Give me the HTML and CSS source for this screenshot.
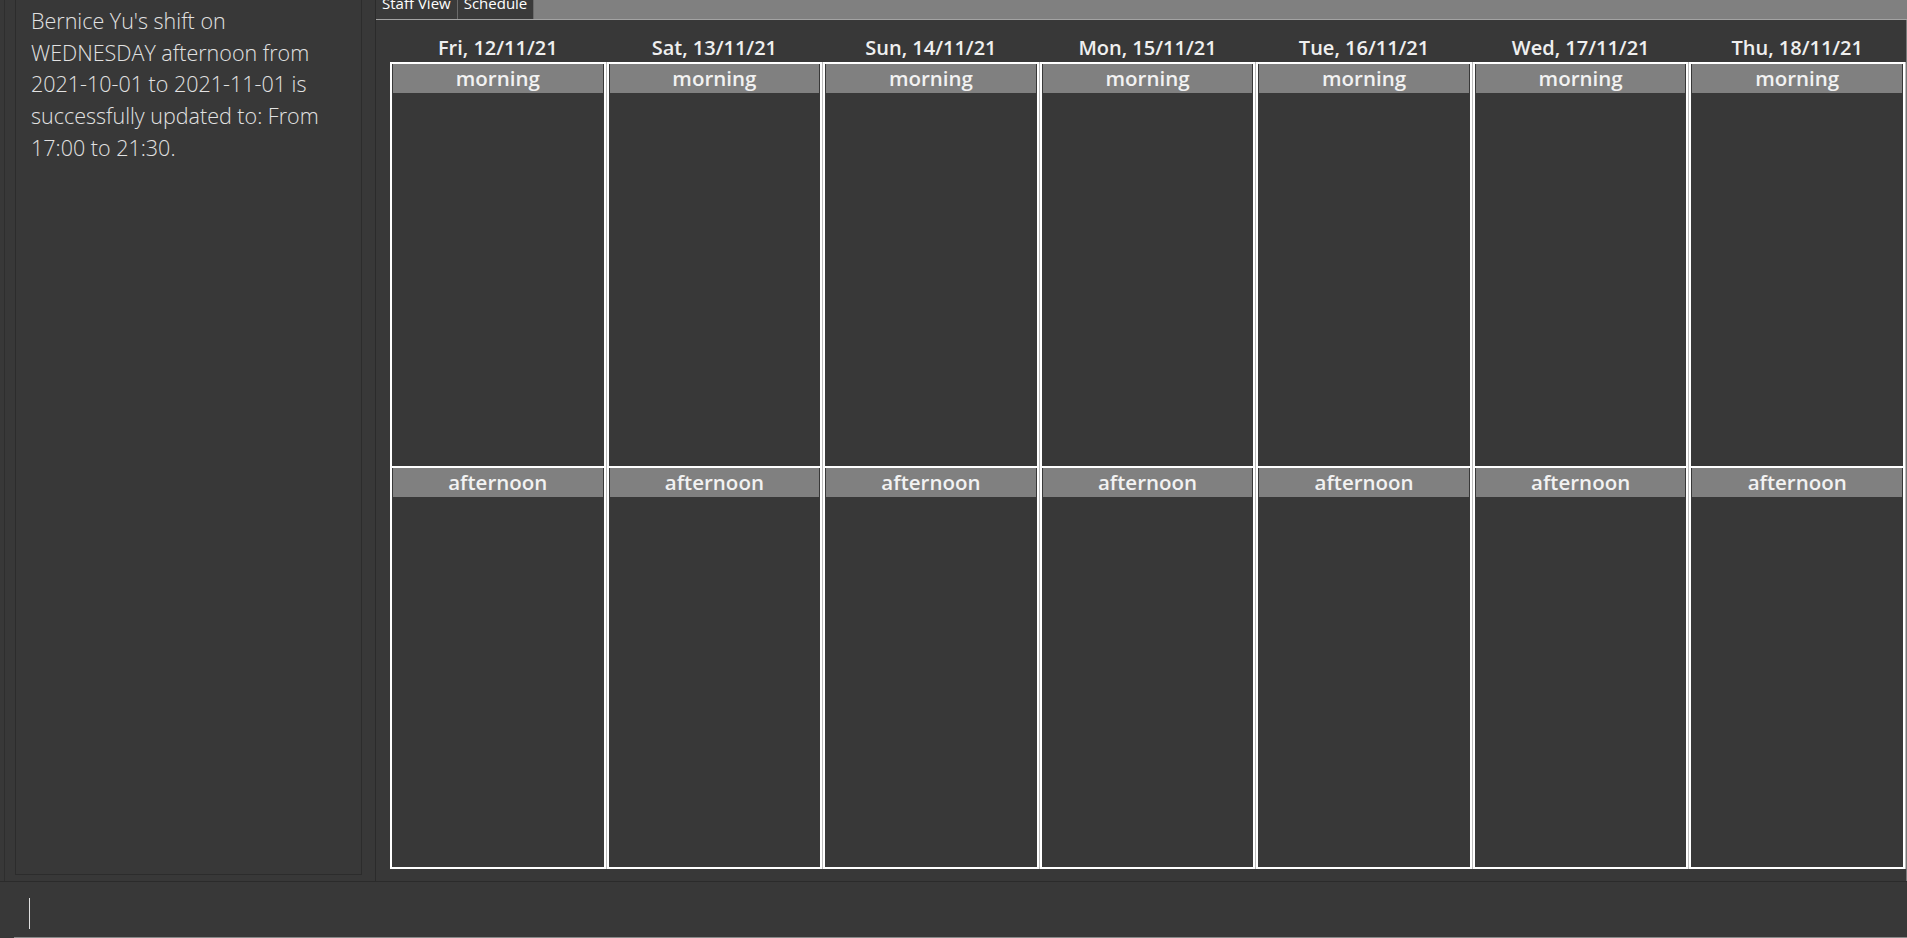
FILE: index.html
```html
<!DOCTYPE html>
<html>
<head>
	<meta charset="utf-8">
	<title>Schedule</title>
	<link rel="stylesheet" href="styles.css">
</head>
<body>
	<div class="main">
		<div class="side">
			<div class="result-panel">
				<p class="result-text">Bernice Yu's shift on WEDNESDAY afternoon from 2021-10-01 to 2021-11-01 is successfully updated to: From 17:00 to 21:30.</p>
			</div>
		</div>
		<div class="tab-pane">
			<div class="tab-bar">
				<div class="tab"><span>Staff View</span></div>
				<div class="tab"><span>Schedule</span></div>
			</div>
			<div class="tab-content">
				<div class="schedule">
					<div class="day-label">Fri, 12/11/21</div>
					<div class="day-label">Sat, 13/11/21</div>
					<div class="day-label">Sun, 14/11/21</div>
					<div class="day-label">Mon, 15/11/21</div>
					<div class="day-label">Tue, 16/11/21</div>
					<div class="day-label">Wed, 17/11/21</div>
					<div class="day-label">Thu, 18/11/21</div>

					<div class="shift morning"><div class="shift-title">morning</div></div>
					<div class="shift morning"><div class="shift-title">morning</div></div>
					<div class="shift morning"><div class="shift-title">morning</div></div>
					<div class="shift morning"><div class="shift-title">morning</div></div>
					<div class="shift morning"><div class="shift-title">morning</div></div>
					<div class="shift morning"><div class="shift-title">morning</div></div>
					<div class="shift morning"><div class="shift-title">morning</div></div>

					<div class="shift afternoon"><div class="shift-title">afternoon</div></div>
					<div class="shift afternoon"><div class="shift-title">afternoon</div></div>
					<div class="shift afternoon"><div class="shift-title">afternoon</div></div>
					<div class="shift afternoon"><div class="shift-title">afternoon</div></div>
					<div class="shift afternoon"><div class="shift-title">afternoon</div></div>
					<div class="shift afternoon"><div class="shift-title">afternoon</div></div>
					<div class="shift afternoon"><div class="shift-title">afternoon</div></div>
				</div>
			</div>
		</div>
	</div>
	<div class="command-box">
		<div class="command-field"><span class="caret"></span></div>
	</div>
</body>
</html>
```

FILE: styles.css
```css
html, body {
	margin: 0;
	padding: 0;
	width: 100%;
	height: 100%;
	overflow: hidden;
}
body {
	display: flex;
	flex-direction: column;
	background-color: #383838;
	font-family: "Open Sans", "DejaVu Sans", sans-serif;
	color: #eeeeee;
}

.main {
	flex: 1;
	display: flex;
	padding-left: 4px;
	border-bottom: 1px solid #2b2b2b;
	min-height: 0;
}

/* result display on the left */
.side {
	width: 371px;
	box-sizing: border-box;
	border-left: 1px solid #2e2e2e;
	padding: 0 13px 6px 10px;
	display: flex;
}
.result-panel {
	flex: 1;
	border: 1px solid #2c2c2c;
	border-top: none;
	padding: 5px 26px 0 15px;
}
.result-text {
	margin: 0;
	font-weight: 300;
	font-size: 21.5px;
	line-height: 31.7px;
	color: #e2e2e2;
}

/* tabs */
.tab-pane {
	flex: 1;
	display: flex;
	flex-direction: column;
	border-left: 1px solid #2b2b2b;
}
.tab-bar {
	height: 19px;
	display: flex;
	background-color: #808080;
	border-bottom: 1px solid #a3a3a3;
	overflow: hidden;
}
.tab {
	padding: 0 6px;
	background-color: #3a3a3a;
	border-right: 1px solid #6a6a6a;
	font-size: 15px;
	color: #ffffff;
}
.tab span {
	display: block;
	margin-top: -6px;
	line-height: 19px;
}

.tab-content {
	flex: 1;
	display: flex;
	padding: 0 1px 12px 14px;
	border-right: 1px solid #7a7a7a;
	min-height: 0;
}
.schedule {
	flex: 1;
	display: grid;
	grid-template-columns: repeat(7, 1fr);
	grid-template-rows: 42px 1fr 1fr;
	column-gap: 1px;
}
.day-label {
	align-self: end;
	text-align: center;
	font-size: 20px;
	font-weight: 600;
	line-height: 24px;
	padding-bottom: 2px;
	color: #efefef;
}
.shift {
	border: 2px solid #ffffff;
	background-color: #383838;
	box-shadow: 1px 0 0 0 #bdbdbd;
}
.shift.morning {
	border-bottom: none;
}
.shift-title {
	margin: 0 1px;
	height: 29px;
	line-height: 29px;
	background-color: #808080;
	text-align: center;
	font-size: 20.5px;
	font-weight: 600;
	color: #f2f2f2;
}

/* command input at the bottom */
.command-box {
	height: 56px;
	padding-left: 14px;
}
.command-field {
	height: 100%;
	box-sizing: border-box;
	border-bottom: 1px solid #8a8a8a;
	padding: 16px 0 0 15px;
}
.caret {
	display: block;
	width: 1px;
	height: 31px;
	background-color: #e0e0e0;
}
```
